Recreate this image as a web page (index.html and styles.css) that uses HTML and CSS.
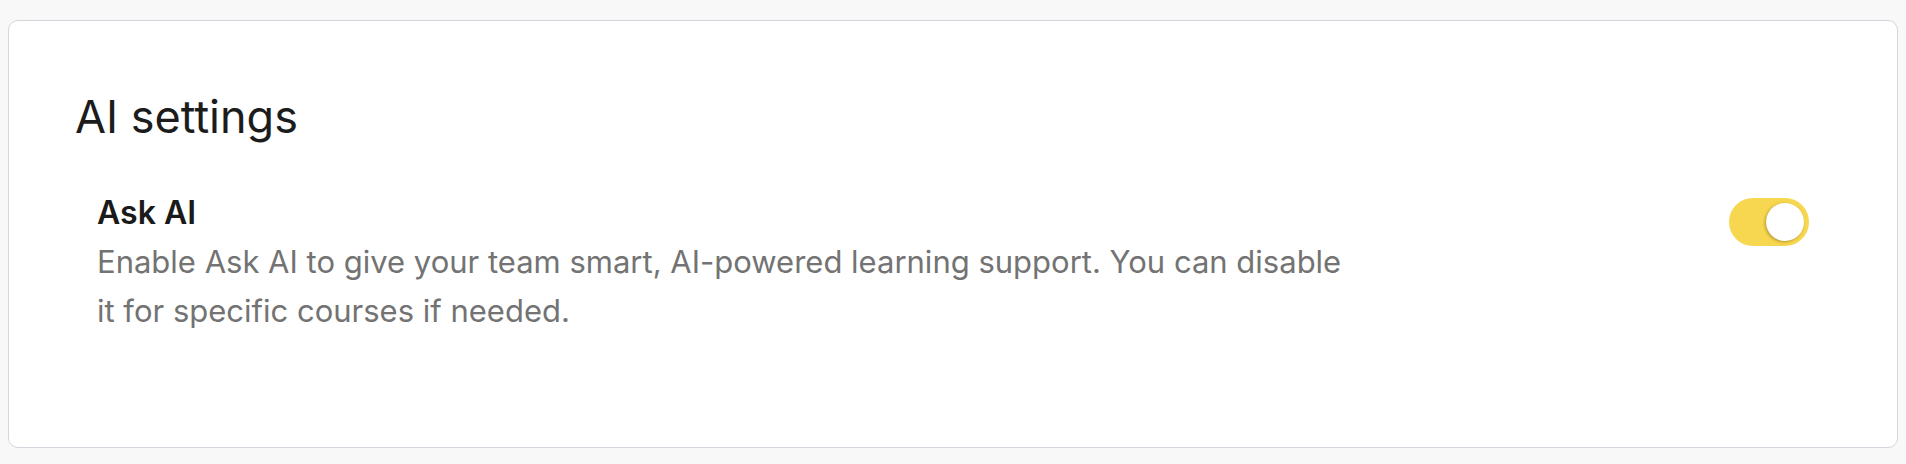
FILE: index.html
```html
<!DOCTYPE html>
<html lang="en">
<head>
    <meta charset="UTF-8">
    <meta name="viewport" content="width=device-width, initial-scale=1.0">
    <title>AI settings</title>
    <link rel="stylesheet" href="styles.css">
</head>
<body>
    <section class="card">
        <h1 class="card-title">AI settings</h1>
        <div class="setting-row">
            <div class="setting-text">
                <div class="setting-label">Ask AI</div>
                <p class="setting-desc">Enable Ask AI to give your team smart, AI-powered learning support. You can disable it for specific courses if needed.</p>
            </div>
            <button class="toggle on" id="askAiToggle" aria-pressed="true" onclick="this.classList.toggle('on')">
                <span class="toggle-knob"></span>
            </button>
        </div>
    </section>
</body>
</html>
```

FILE: styles.css
```css
body {
    margin: 0;
    padding: 20px 8px 17px;
    font-family: Inter, "Noto Sans", Arial, sans-serif;
    background-color: #f8f8f8;
    color: #1c1c1c;
}
.card {
    height: 428px;
    box-sizing: border-box;
    padding: 68px 66px 0;
    border: 1px solid #d2d7de;
    border-radius: 10px;
    background-color: #fff;
}
.card-title {
    margin: 0;
    font-size: 45px;
    font-weight: 400;
    line-height: 55px;
}
.setting-row {
    display: flex;
    justify-content: space-between;
    align-items: flex-start;
    margin-top: 45px;
    padding: 0 22px;
}
.setting-label {
    font-size: 32px;
    font-weight: 600;
    line-height: 48px;
    color: #1a1a1a;
}
.setting-desc {
    max-width: 1262px;
    margin: 0;
    font-size: 31px;
    line-height: 49px;
    color: #737373;
}
/* Toggle switch */
.toggle {
    position: relative;
    flex-shrink: 0;
    width: 80px;
    height: 48px;
    margin-top: 9px;
    padding: 0;
    border: none;
    border-radius: 24px;
    background-color: #d9d9d9;
    cursor: pointer;
    transition: background-color 0.2s;
}
.toggle.on {
    background-color: #f7d650;
}
.toggle-knob {
    position: absolute;
    top: 5px;
    left: 5px;
    width: 38px;
    height: 38px;
    border-radius: 50%;
    background-color: #fff;
    box-shadow: -1px 1px 3px rgba(90, 70, 0, 0.45);
    transition: left 0.2s;
}
.toggle.on .toggle-knob {
    left: 37px;
}
```
